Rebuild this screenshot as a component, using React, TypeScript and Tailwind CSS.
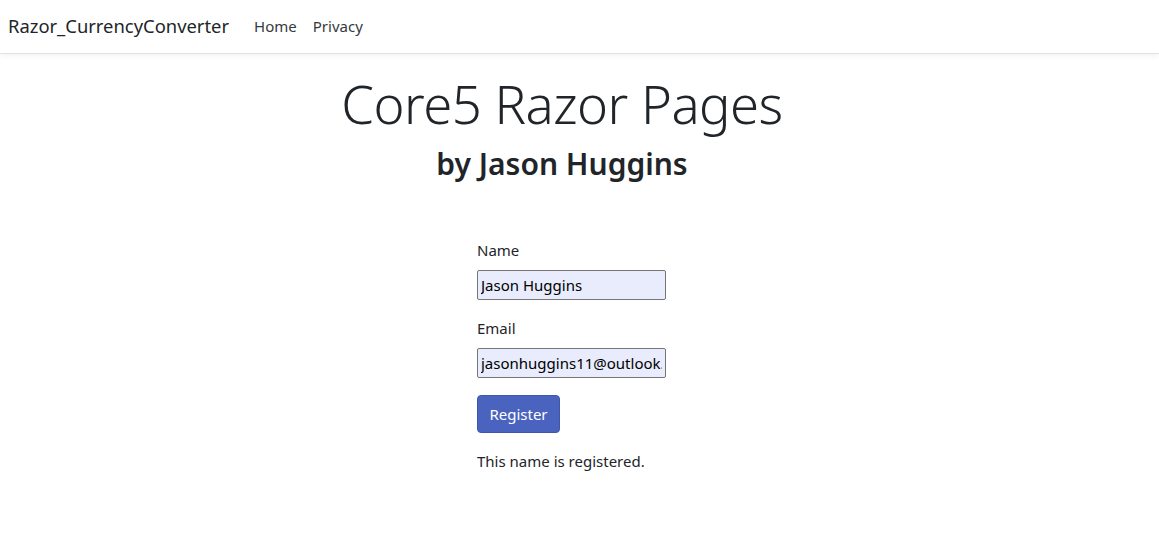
import React from 'react';

export default function App() {
  return (
    <div className="min-h-[548px] bg-white text-[#212529]" style={{ fontFamily: '"Noto Sans", "Open Sans", sans-serif' }}>
      <header className="h-[54px] border-b border-[#dee2e6] shadow-[0_2px_6px_rgba(0,0,0,0.05)] flex items-center px-2">
        <a className="text-[18.4px] text-[#212529] mr-[25px] leading-none">Razor_CurrencyConverter</a>
        <nav className="flex items-center gap-4 text-[15px] text-[#343a40]">
          <a>Home</a>
          <a>Privacy</a>
        </nav>
      </header>

      <main className="w-[1124px]">
        <div className="text-center pt-[21px]">
          <h1 className="text-[52.6px] font-light leading-[1.1] tracking-[-0.5px]">Core5 Razor Pages</h1>
          <h2 className="text-[30px] font-semibold leading-[1.2] mt-[13px]">by Jason Huggins</h2>
        </div>

        <form className="ml-[477px] mt-[56px] flex flex-col text-[15px]">
          <label className="leading-[24px]">Name</label>
          <input
            defaultValue="Jason Huggins"
            className="mt-[8px] w-[189px] h-[30px] px-[3px] bg-[#e8ecfc] border border-[#767676] rounded-[2px] text-[15px] text-black outline-none"
          />
          <label className="leading-[24px] mt-[16px]">Email</label>
          <input
            defaultValue="jasonhuggins11@outlook.com"
            className="mt-[8px] w-[189px] h-[30px] px-[3px] bg-[#e8ecfc] border border-[#767676] rounded-[2px] text-[15px] text-black outline-none"
          />
          <button
            type="button"
            className="mt-[17px] w-[83px] h-[38px] bg-[#4a63bf] border border-[#3f56aa] rounded-[4px] text-white text-[15px]"
          >
            Register
          </button>
          <p className="mt-[16px] leading-[24px]">This name is registered.</p>
        </form>
      </main>
    </div>
  );
}
